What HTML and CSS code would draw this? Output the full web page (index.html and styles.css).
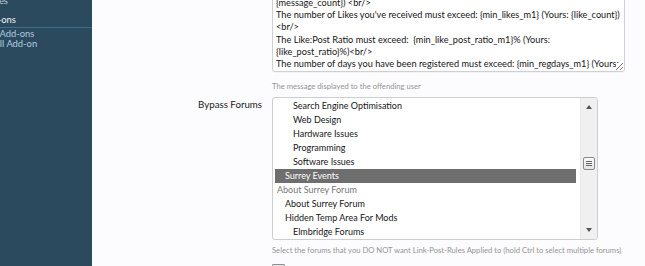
FILE: index.html
```html
<!DOCTYPE html>
<html>
<head>
<meta charset="utf-8">
<link rel="stylesheet" href="styles.css">
</head>
<body>
<div class="sidebar">
  <div class="nav">
    <div class="nav-link prev">Phrases</div>
    <div class="nav-head">Add-ons</div>
    <div class="nav-link first">List Add-ons</div>
    <div class="nav-link install">Install Add-on</div>
  </div>
</div>
<div class="main">
  <div class="row">
    <div class="label"></div>
    <div class="control">
      <div class="textarea">
        <div class="ta-line">{message_count}) &lt;br/&gt;</div>
        <div class="ta-line">The number of Likes you've received must exceed: {min_likes_m1} (Yours: {like_count})</div>
        <div class="ta-line">&lt;br/&gt;</div>
        <div class="ta-line">The Like:Post Ratio must exceed:&nbsp; {min_like_post_ratio_m1}% (Yours:</div>
        <div class="ta-line">{like_post_ratio}%)&lt;br/&gt;</div>
        <div class="ta-line">The number of days you have been registered must exceed: {min_regdays_m1} (Yours:</div>
        <span class="grip"></span>
      </div>
      <p class="hint">The message displayed to the offending user</p>
    </div>
  </div>
  <div class="row row-select">
    <div class="label">Bypass Forums</div>
    <div class="control">
      <div class="select">
        <div class="options">
          <div class="opt d2">Search Engine Optimisation</div>
          <div class="opt d2">Web Design</div>
          <div class="opt d2">Hardware Issues</div>
          <div class="opt d2">Programming</div>
          <div class="opt d2">Software Issues</div>
          <div class="opt d1 selected">Surrey Events</div>
          <div class="opt d0 cat">About Surrey Forum</div>
          <div class="opt d1">About Surrey Forum</div>
          <div class="opt d1">Hidden Temp Area For Mods</div>
          <div class="opt d2">Elmbridge Forums</div>
        </div>
        <div class="scrollbar">
          <span class="arrow up"></span>
          <span class="track">
            <span class="thumb"><i></i><i></i><i></i></span>
          </span>
          <span class="arrow down"></span>
        </div>
      </div>
      <p class="hint">Select the forums that you DO NOT want Link-Post-Rules Applied to (hold Ctrl to select multiple forums)</p>
      <div class="checkbox"></div>
    </div>
  </div>
</div>
</body>
</html>
```
FILE: styles.css
```css
html, body {
  margin: 0;
  padding: 0;
  height: 266px;
  overflow: hidden;
}
body {
  display: flex;
  background: #fcfcfe;
  font-family: Lato, "Open Sans", sans-serif;
  color: #1a1a1a;
}
.sidebar {
  width: 92px;
  flex: none;
  background: #2c4a5e;
  overflow: hidden;
}
.nav {
  margin-top: -4px;
  font-size: 9.4px;
}
.nav-link {
  color: #aecbe0;
  line-height: 10.5px;
  margin-left: -17px;
  white-space: nowrap;
}
.nav-link.prev {
  color: #b9cfdf;
  margin-left: -24px;
}
.nav-link.install {
  margin-left: -20px;
}
.nav-head {
  color: #eef3f7;
  margin-top: 7px;
  margin-left: -19px;
  line-height: 11px;
  padding-bottom: 2px;
  border-bottom: 1px solid #3f6d8c;
  white-space: nowrap;
}
.nav-link.first {
  margin-top: 1px;
}
.main {
  flex: 1;
  min-width: 0;
}
.row {
  display: grid;
  grid-template-columns: 170px 353px;
  column-gap: 10px;
}
.label {
  text-align: right;
  font-size: 9.7px;
  line-height: 14px;
  padding-top: 5px;
  color: #1a1a1a;
}
.textarea {
  position: relative;
  margin-top: -7px;
  border: 1px solid #cfcfd4;
  border-radius: 3px;
  background: #fff;
  padding: 3px 4px 1px 3px;
  font-size: 9.2px;
  line-height: 12.2px;
  color: #161616;
  overflow: hidden;
  box-shadow: 0 1px 1px rgba(0,0,0,0.03);
}
.ta-line {
  white-space: nowrap;
  overflow: hidden;
}
.grip {
  position: absolute;
  right: 1px;
  bottom: 1px;
  width: 7px;
  height: 7px;
  background:
    linear-gradient(135deg, transparent 45%, #777 45%, #777 55%, transparent 55%),
    linear-gradient(135deg, transparent 75%, #777 75%, #777 85%, transparent 85%);
  background-color: #fff;
}
.hint {
  margin: 8px 0 0;
  font-size: 7.65px;
  line-height: 12px;
  color: #949494;
  white-space: nowrap;
}
.select {
  margin-top: 5px;
  width: 324px;
  display: flex;
  border: 1px solid #cdcdd2;
  border-radius: 3px;
  background: #fff;
  overflow: hidden;
}
.options {
  flex: 1;
  padding: 1px 4px 0 2px;
  font-size: 9px;
}
.opt {
  height: 14px;
  line-height: 14px;
  white-space: nowrap;
  color: #161616;
}
.opt.d0 { padding-left: 2px; }
.opt.d1 { padding-left: 10px; }
.opt.d2 { padding-left: 18px; }
.opt.cat { color: #777; }
.opt.selected {
  background: #6e6e6e;
  color: #fff;
}
.scrollbar {
  width: 16px;
  flex: none;
  background: #f0f0f0;
  border-left: 1px solid #e6e6e6;
  display: flex;
  flex-direction: column;
  align-items: center;
}
.arrow {
  width: 0;
  height: 0;
  border-left: 3.5px solid transparent;
  border-right: 3.5px solid transparent;
  margin: 7px 0;
}
.arrow.up { border-bottom: 4px solid #555; }
.arrow.down { border-top: 4px solid #555; }
.track {
  flex: 1;
  width: 100%;
  display: flex;
  flex-direction: column;
  align-items: center;
  padding-top: 41px;
}
.thumb {
  width: 12px;
  height: 13px;
  box-sizing: border-box;
  border: 1px solid #8a8a8a;
  border-radius: 2px;
  background: linear-gradient(#fafafa, #e4e4e4);
  display: flex;
  flex-direction: column;
  align-items: center;
  justify-content: center;
  gap: 1px;
}
.thumb i {
  display: block;
  width: 6px;
  height: 1px;
  background: #666;
}
.row-select .hint {
  margin-top: 4px;
}
.checkbox {
  margin-top: 8px;
  width: 13px;
  height: 13px;
  box-sizing: border-box;
  border: 1px solid #8f8f8f;
  border-radius: 1px;
  background: linear-gradient(#e6e6e6, #fff);
}
```
